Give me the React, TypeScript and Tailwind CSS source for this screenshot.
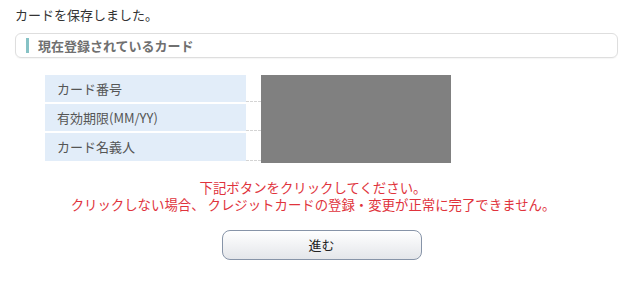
const font = { fontFamily: '"Noto Sans CJK JP", "Noto Sans", sans-serif' };

const rows = ["カード番号", "有効期限(MM/YY)", "カード名義人"];

export default function App() {
    return (
        <div className="w-[640px] h-[284px] bg-white text-[13px] text-[#333] overflow-hidden" style={font}>
            <p className="pl-[15px] pt-[6px] leading-[18px]">カードを保存しました。</p>
            <div className="ml-[15px] mt-[9px] w-[603px] h-[25px] rounded-[6px] border border-[#dedede] shadow-[0_1px_1px_rgba(0,0,0,0.04)] flex items-center pl-[10px]">
                <span className="w-[3px] h-[15px] bg-[#86c2c5]"></span>
                <span className="ml-[9px] text-[#707070] font-bold leading-none">現在登録されているカード</span>
            </div>
            <div className="ml-[45px] mt-[17px] flex">
                <div className="flex flex-col gap-[2px]">
                    {rows.map((r, i) => (
                        <div key={r} className="flex">
                            <div className={`w-[201px] ${i === 2 ? "h-[28px]" : "h-[27px]"} bg-[#e2edf9] pl-[12px] flex items-center text-[#555]`}>
                                {r}
                            </div>
                            <div className="w-[15px] border-b border-dashed border-[#d4d4d4]"></div>
                        </div>
                    ))}
                </div>
                <div className="w-[190px] h-[88px] bg-[#808080]"></div>
            </div>
            <div className="w-[626px] mt-[16px] text-center text-[#e0333c] text-[13.4px] leading-[17px]">
                <p>下記ボタンをクリックしてください。</p>
                <p>クリックしない場合、 クレジットカードの登録・変更が正常に完了できません。</p>
            </div>
            <div className="w-[626px] pl-[17px] mt-[17px] flex justify-center">
                <button className="w-[200px] h-[30px] rounded-[8px] border-[1.5px] border-[#8794a8] bg-gradient-to-b from-white to-[#e4e6ea] text-[#222] text-[13px]" style={font}>
                    進む
                </button>
            </div>
        </div>
    );
}
